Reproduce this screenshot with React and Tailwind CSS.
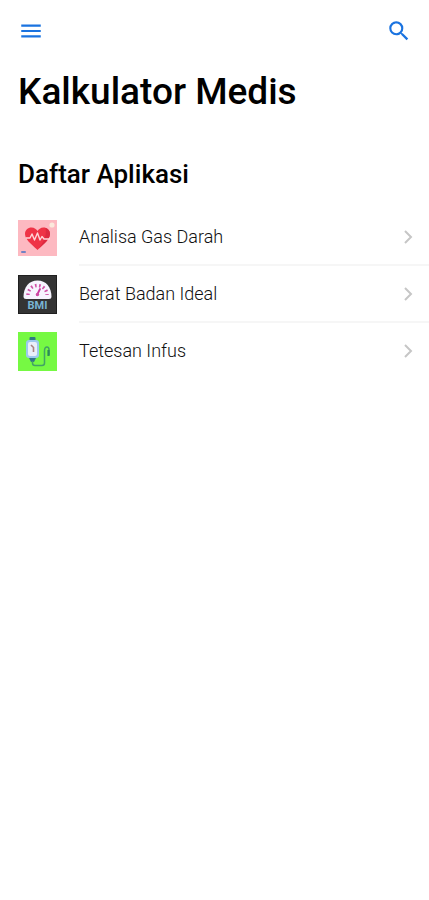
import React from 'react';
import { MdMenu, MdSearch } from 'react-icons/md';

function HeartIcon() {
  return (
    <svg className="w-[39px] h-9" viewBox="0 0 39 36" aria-hidden="true">
      <rect width="39" height="36" fill="#fdb9c1" />
      <circle cx="34" cy="5" r="2.6" fill="#fbe9dc" />
      <path
        d="M19.5 30C17 27 7 20.500 7 14C7 10 10 7.500 13.500 7.500C16.500 7.500 18.500 9.500 19.500 11C20.500 9.500 22.500 7.500 25.500 7.500C29 7.500 32 10 32 14C32 20.500 22 27 19.500 30Z"
        fill="#ef3346"
      />
      <path d="M20 29.500C23 26 31.500 20.500 32 14C32 11 30 8.500 27.500 8C29 15 26 22 20 29.500Z" fill="#dc2a40" />
      <path
        d="M8 18H12L14 14L16.500 20L19.500 13L22 20L24 16.500L26 19H32"
        fill="none"
        stroke="#ffd5d8"
        strokeWidth="1.4"
        strokeLinejoin="round"
      />
      <rect x="3" y="31" width="5" height="2" rx="1" fill="#7183c4" />
    </svg>
  );
}

function ScaleIcon() {
  return (
    <svg className="w-[39px] h-[39px]" viewBox="0 0 39 39" aria-hidden="true">
      <rect width="39" height="39" fill="#1f1f1f" />
      <rect x="1" y="1" width="37" height="37" fill="#343434" />
      <path d="M5.500 22C5.500 12 11 5.500 19.500 5.500S33.500 12 33.500 22Q33.500 24 31 24H8Q5.500 24 5.500 22Z" fill="#f7f4ff" />
      <path d="M10 20A9.500 9.500 0 0 1 29 20" fill="none" stroke="#cf4fa5" strokeWidth="3.4" strokeDasharray="1.6 2.5" />
      <path d="M19 20L22 14" stroke="#c93aa0" strokeWidth="1.8" strokeLinecap="round" />
      <circle cx="19.5" cy="19.5" r="1.7" fill="#d04aa5" />
      <text
        x="19.5"
        y="33.5"
        textAnchor="middle"
        className="font-['Roboto',sans-serif] text-[11px] font-bold"
        fill="#78b4d3"
      >
        BMI
      </text>
    </svg>
  );
}

function InfusionIcon() {
  return (
    <svg className="w-[39px] h-[39px]" viewBox="0 0 39 39" aria-hidden="true">
      <rect width="39" height="39" fill="#76f943" />
      <rect x="11.5" y="5" width="6" height="4" rx="1" fill="#2f7b83" />
      <rect x="8" y="8" width="13" height="18" rx="3" fill="#9cc9ee" />
      <rect x="10" y="10" width="9" height="14" rx="2" fill="#e9effb" />
      <path d="M13 13L15.500 15.500V20" fill="none" stroke="#a98282" strokeWidth="1.6" />
      <path d="M11 26H18L16 30H13Z" fill="#33748a" />
      <path
        d="M14.500 29V31Q14.500 33.500 17 33.500H24Q26.500 33.500 26.500 31V19Q26.500 15 29 15Q31 15 31 18V23"
        fill="none"
        stroke="#42a365"
        strokeWidth="1.5"
      />
      <path d="M30.500 18V24" stroke="#2d8a58" strokeWidth="2.2" />
    </svg>
  );
}

const apps = [
  { id: 'agd', title: 'Analisa Gas Darah', icon: HeartIcon },
  { id: 'bbi', title: 'Berat Badan Ideal', icon: ScaleIcon },
  { id: 'infus', title: 'Tetesan Infus', icon: InfusionIcon },
];

function AppList({ items }) {
  return (
    <ul>
      {items.map((item) => (
        <li key={item.id} className="group">
          <a href={`#${item.id}`} className="flex items-center pl-[18px]">
            <span className="w-[61px] shrink-0">
              <item.icon />
            </span>
            <span className="flex flex-1 items-center justify-between h-[57px] pr-4 border-b-2 border-[#f6f6f6] group-last:border-transparent">
              <span className="text-[18px] leading-6 font-light text-[#111]">{item.title}</span>
              <svg className="w-2.5 h-4" viewBox="0 0 10 16" fill="none" aria-hidden="true">
                <path d="M2 2L8 8L2 14" stroke="#c6c6c6" strokeWidth="2" />
              </svg>
            </span>
          </a>
        </li>
      ))}
    </ul>
  );
}

function App() {
  return (
    <div className="min-h-screen bg-white font-['Roboto',sans-serif]">
      <header className="flex items-center justify-between h-[62px] pl-[18px] pr-[17px] text-[#1a73e0]">
        <button type="button" aria-label="Menu">
          <MdMenu className="w-[26px] h-[26px]" />
        </button>
        <button type="button" aria-label="Search">
          <MdSearch className="w-[26px] h-[26px]" />
        </button>
      </header>

      <main>
        <h1 className="px-[18px] pt-2 text-[37px] leading-[44px] font-medium text-black">Kalkulator Medis</h1>
        <h2 className="px-[18px] pt-11 pb-[19px] text-[26px] leading-8 font-medium text-black">Daftar Aplikasi</h2>
        <AppList items={apps} />
      </main>
    </div>
  );
}

export default App;
